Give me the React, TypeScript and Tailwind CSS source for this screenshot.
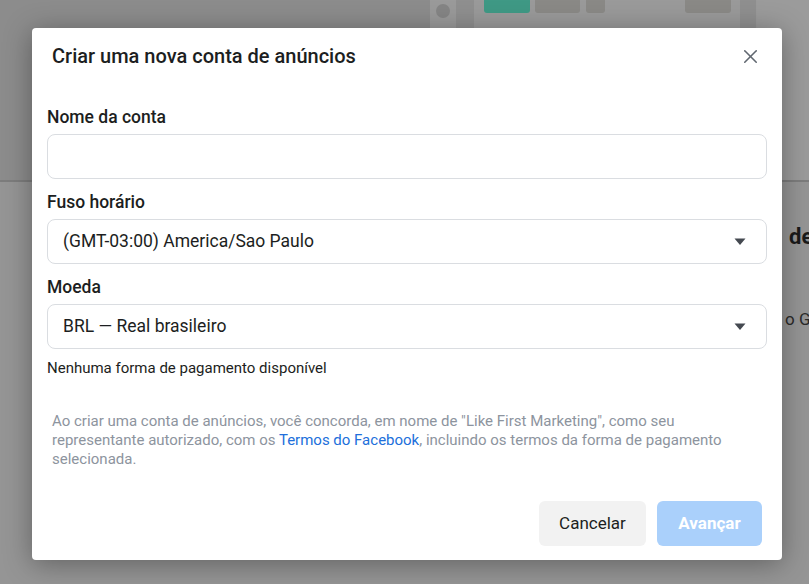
import { X } from "lucide-react";

const Caret = () => (
  <svg width="12" height="8" viewBox="0 0 12 8" className="shrink-0">
    <path d="M0.5 0.5h11L6 7z" fill="#444950" />
  </svg>
);

const Field = ({ label, value, select }: { label: string; value?: string; select?: boolean }) => (
  <div className="flex flex-col">
    <label className="text-[17.5px] leading-[20px] font-medium text-[#1c1e21]">{label}</label>
    <div className="mt-[7px] flex h-[45px] items-center justify-between rounded-[8px] border border-[#dadde1] bg-white pl-[15px] pr-[20px]">
      <span className="text-[17.5px] text-[#1c1e21]">{value}</span>
      {select && <Caret />}
    </div>
  </div>
);

const App = () => {
  return (
    <div
      className="relative h-[584px] w-[809px] overflow-hidden bg-[#8c8c8c]"
      style={{ fontFamily: "Roboto, 'Noto Sans', Arial, sans-serif" }}
    >
      {/* pagina atras do overlay */}
      <div className="flex h-[180px]">
        <div className="w-[430px] bg-[#8c8c8c]" />
        <div className="flex h-[28px] w-[327px] items-start bg-[#9a9a9a]">
          <div className="ml-[6px] mt-[4px] h-[14px] w-[14px] rounded-full bg-[#858585]" />
          <div className="ml-[6px] h-[28px] w-[18px] bg-[#8f8f8f]" />
          <div className="ml-[10px] h-[13px] w-[46px] rounded-b-[3px] bg-[#3f9985]" />
          <div className="ml-[5px] h-[13px] w-[45px] rounded-b-[3px] bg-[#8a8986]" />
          <div className="ml-[6px] h-[13px] w-[19px] rounded-b-[3px] bg-[#8a8986]" />
          <div className="ml-[80px] h-[13px] w-[46px] rounded-b-[3px] bg-[#8a8986]" />
          <div className="ml-[9px] h-[28px] w-[16px] bg-[#8f8f8f]" />
        </div>
        <div className="flex-1 bg-[#9b9b9b]" />
      </div>
      <div className="h-[2px] bg-[#7d7d7d]" />
      <div className="h-[402px] bg-[#959595] pl-[789px] whitespace-nowrap">
        <div className="pt-[38px] text-[22px] font-bold text-[#1a1a1a]">de</div>
        <div className="pt-[54px] text-[17px] text-[#2a2a2a] -ml-[4px]">o Ge</div>
      </div>

      {/* modal */}
      <div className="absolute left-[32px] top-[28px] flex h-[532px] w-[750px] flex-col rounded-[4px] bg-white shadow-[0_4px_28px_rgba(0,0,0,0.35)]">
        <div className="flex h-[56px] items-center justify-between pl-[20px] pr-[20px]">
          <h2 className="text-[20px] font-medium text-[#1c1e21]">Criar uma nova conta de anúncios</h2>
          <X size={23} strokeWidth={1.6} color="#606770" />
        </div>

        <div className="mt-[23px] flex flex-col gap-[13px] px-[15px]">
          <Field label="Nome da conta" />
          <Field label="Fuso horário" value="(GMT-03:00) America/Sao Paulo" select />
          <Field label="Moeda" value="BRL — Real brasileiro" select />
        </div>
        <p className="mt-[10px] px-[15px] text-[15px] leading-[18px] text-[#1c1e21]">
          Nenhuma forma de pagamento disponível
        </p>

        <p className="mt-[35px] px-[20px] text-[15px] leading-[19px] text-[#8d949e]">
          Ao criar uma conta de anúncios, você concorda, em nome de "Like First Marketing", como seu
          <br />
          representante autorizado, com os <span className="text-[#216fdb]">Termos do Facebook</span>, incluindo os termos da forma de pagamento
          <br />
          selecionada.
        </p>

        <div className="mt-auto mb-[14px] flex justify-end gap-[11px] pr-[20px]">
          <button className="h-[45px] w-[107px] rounded-[6px] bg-[#f2f2f2] text-[17px] text-[#1c1e21]">
            Cancelar
          </button>
          <button className="h-[45px] w-[105px] rounded-[6px] bg-[#aad0fb] text-[17px] font-bold text-white">
            Avançar
          </button>
        </div>
      </div>
    </div>
  );
};

export default App;
